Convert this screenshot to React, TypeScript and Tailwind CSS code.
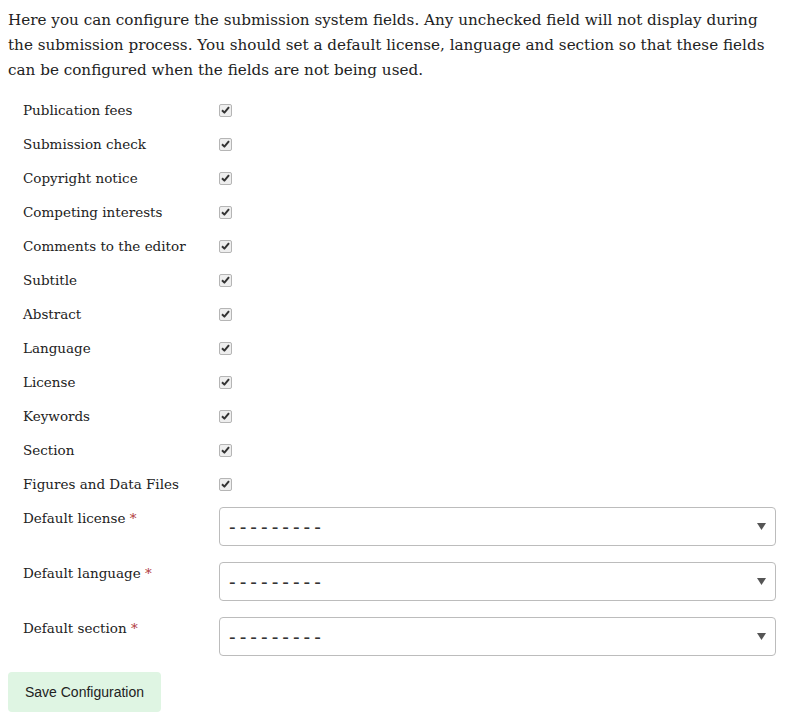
import React from "react";

const fields = [
  "Publication fees",
  "Submission check",
  "Copyright notice",
  "Competing interests",
  "Comments to the editor",
  "Subtitle",
  "Abstract",
  "Language",
  "License",
  "Keywords",
  "Section",
  "Figures and Data Files",
];

const defaults = ["Default license", "Default language", "Default section"];

function CheckMark() {
  return (
    <div className="w-[13px] h-[13px] rounded-[2px] border border-[#b5b5b5] bg-[#eeeeee] flex items-center justify-center">
      <svg width="9" height="8" viewBox="0 0 9 8">
        <path d="M1 4.2 L3.4 6.6 L8 1.2" stroke="#333" strokeWidth="2" fill="none" strokeLinejoin="round" />
      </svg>
    </div>
  );
}

function SelectBox() {
  return (
    <div className="h-[39px] w-full rounded-[4px] border border-[#bcbcbc] bg-white flex items-center justify-between pl-[9px] pr-[9px]">
      <span className="font-['Liberation_Sans',sans-serif] text-[20px] leading-none text-[#333] tracking-[4px]">---------</span>
      <svg width="9" height="7" viewBox="0 0 9 7">
        <path d="M0 0 H9 L4.5 7 Z" fill="#555" />
      </svg>
    </div>
  );
}

export default function App() {
  return (
    <div className="p-2 bg-white text-[#222] font-['DejaVu_Serif',serif]">
      <p className="text-[15.2px] leading-[25px] whitespace-nowrap">
        Here you can configure the submission system fields. Any unchecked field will not display during
        <br />
        the submission process. You should set a default license, language and section so that these fields
        <br />
        can be configured when the fields are not being used.
      </p>

      <div className="mt-[10px]">
        {fields.map((f) => (
          <div key={f} className="grid grid-cols-[211px_1fr] h-[34px] items-center">
            <span className="pl-[15px] text-[13.5px]">{f}</span>
            <CheckMark />
          </div>
        ))}

        {defaults.map((d) => (
          <div key={d} className="grid grid-cols-[211px_1fr] h-[55px] pt-[6px] items-start">
            <span className="pl-[15px] text-[13.5px] leading-[22px]">
              {d} <span className="text-[#b03a3a]">*</span>
            </span>
            <div className="pr-[21px]">
              <SelectBox />
            </div>
          </div>
        ))}
      </div>

      <button className="mt-[6px] h-[40px] w-[153px] rounded-[4px] bg-[#dff5e3] text-[14px] text-[#222] font-['Liberation_Sans',sans-serif]">
        Save Configuration
      </button>
    </div>
  );
}
